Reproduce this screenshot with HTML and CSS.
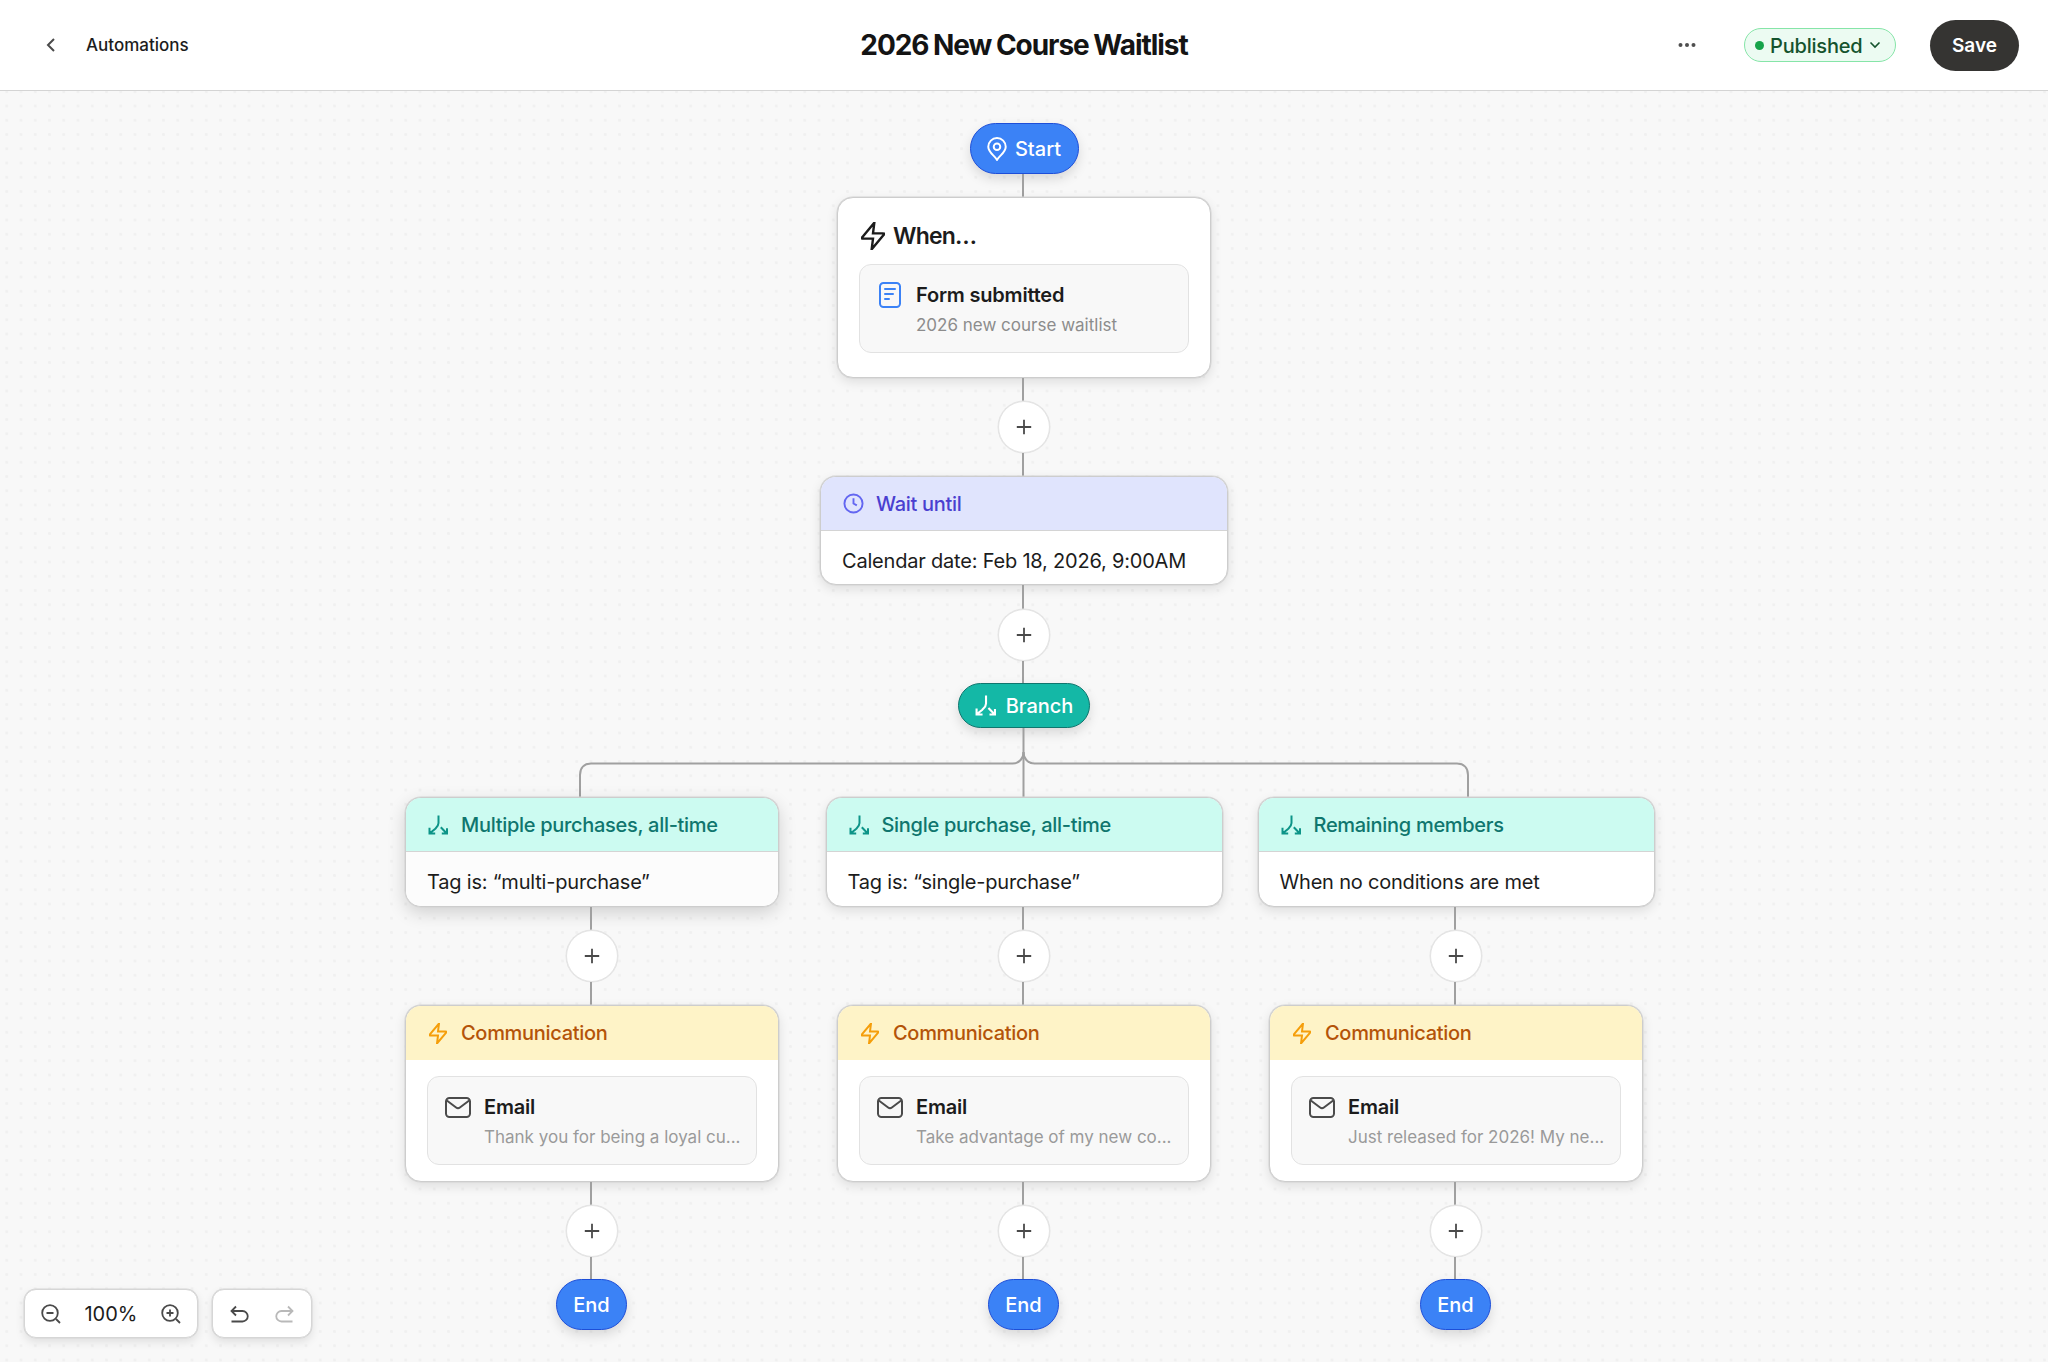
FILE: index.html
```html
<!DOCTYPE html>
<html lang="en">
<head>
<meta charset="utf-8">
<title>2026 New Course Waitlist</title>
<link rel="stylesheet" href="styles.css">
</head>
<body>
<svg class="sprites" width="0" height="0" aria-hidden="true">
  <symbol id="zap" viewBox="3 1.500 18 21"><path d="M13 2 4.090 12.690c-.35.42-.52.63-.53.8 0 .16.07.3.19.4.14.11.41.11.95.11H12l-1 8 8.910-10.690c.35-.42.52-.63.53-.8a.5.5 0 0 0-.19-.4c-.14-.11-.41-.11-.95-.11H12l1-8Z"/></symbol>
  <symbol id="branch" viewBox="0 0 20 20"><path d="M10.500.5V8c0 3-2 4.500-3.500 6L1.500 18.500M1.500 12.800v5.700h5.700M12.800 12.300l6 6.200M19 13.300v5.200h-5.200"/></symbol>
  <symbol id="mail" viewBox="0 0 26 21"><rect x="1" y="1" width="24" height="19" rx="3.500"/><path d="m1.800 3.500 9.300 7c1.200.9 2.600.9 3.800 0l9.300-7"/></symbol>
  <symbol id="plus" viewBox="0 0 16 16"><path d="M8 .8v14.400M.8 8h14.400"/></symbol>
</svg>

<header class="topbar">
  <nav class="crumb">
    <svg class="chevron" width="10" height="16" viewBox="0 0 10 16"><path d="M8 2 2 8l6 6"/></svg>
    <span class="crumb-label">Automations</span>
  </nav>
  <h1 class="title">2026 New Course Waitlist</h1>
  <div class="actions">
    <svg class="more" width="18" height="6" viewBox="0 0 18 6"><circle cx="2.500" cy="3" r="2"/><circle cx="9" cy="3" r="2"/><circle cx="15.500" cy="3" r="2"/></svg>
    <div class="status">
      <span class="status-dot"></span>
      <span class="status-label">Published</span>
      <svg class="status-caret" width="12" height="8" viewBox="0 0 12 8"><path d="m1.500 1.500 4.500 4.500 4.500-4.500"/></svg>
    </div>
    <button class="save">Save</button>
  </div>
</header>

<main class="canvas">
  <div class="pill pill-blue pill-start">
    <svg class="pin" width="20" height="24" viewBox="3 1 18 22"><path d="M12 13a3 3 0 1 0 0-6 3 3 0 0 0 0 6Z"/><path d="M12 22c2-4 8-6.500 8-12a8 8 0 1 0-16 0c0 5.500 6 8 8 12Z"/></svg>
    Start
  </div>
  <div class="link"></div>
  <section class="card card-when">
    <div class="when-title">
      <svg class="when-icon" width="24" height="28"><use href="#zap"/></svg>
      <span class="when-label">When…</span>
    </div>
    <div class="detail">
      <div class="detail-icon">
        <svg class="doc" width="22" height="26" viewBox="0 0 22 26"><rect x="1" y="1" width="20" height="24" rx="3.500"/><path d="M6 7h10M6 12h8M6 17h4"/></svg>
      </div>
      <div>
        <div class="detail-title">Form submitted</div>
        <div class="detail-sub">2026 new course waitlist</div>
      </div>
    </div>
  </section>
  <div class="link"></div>
  <button class="add"><svg class="add-icon" width="16" height="16"><use href="#plus"/></svg></button>
  <div class="link"></div>
  <section class="card card-wait">
    <div class="card-head head-indigo">
      <svg class="head-icon clock" width="21" height="21" viewBox="0 0 22 22"><circle cx="11" cy="11" r="9.500"/><path d="M11 5.500V11l3.500 2"/></svg>
      Wait until
    </div>
    <div class="card-body">Calendar date: Feb 18, 2026, 9:00AM</div>
  </section>
  <div class="link link-long"></div>
  <button class="add"><svg class="add-icon" width="16" height="16"><use href="#plus"/></svg></button>
  <div class="link link-short"></div>
  <div class="pill pill-teal pill-branch">
    <svg class="branch-icon" width="21" height="21"><use href="#branch"/></svg>
    Branch
  </div>
  <svg class="fork" width="892" height="69" viewBox="0 0 892 69">
    <path d="M445.500 0V69"/>
    <path d="M445.500 24c0 6-4 11.500-11 11.500H13C6 35.500 2 40 2 47v22"/>
    <path d="M445.500 24c0 6 4 11.500 11 11.500H879c7 0 11 4.500 11 11.500v22"/>
  </svg>

  <div class="columns">
    <div class="column">
      <section class="card card-branch card-narrow card-raised">
        <div class="card-head head-teal">
          <svg class="head-icon teal-icon" width="20" height="20"><use href="#branch"/></svg>
          Multiple purchases, all-time
        </div>
        <div class="card-body">Tag is: “multi-purchase”</div>
      </section>
      <div class="link"></div>
      <button class="add"><svg class="add-icon" width="16" height="16"><use href="#plus"/></svg></button>
      <div class="link"></div>
      <section class="card card-comm">
        <div class="card-head head-amber">
          <svg class="head-icon amber-icon" width="18" height="21"><use href="#zap"/></svg>
          Communication
        </div>
        <div class="comm-body">
          <div class="detail">
            <div class="detail-icon"><svg class="mail" width="26" height="21"><use href="#mail"/></svg></div>
            <div>
              <div class="detail-title">Email</div>
              <div class="detail-sub">Thank you for being a loyal cu...</div>
            </div>
          </div>
        </div>
      </section>
      <div class="link"></div>
      <button class="add"><svg class="add-icon" width="16" height="16"><use href="#plus"/></svg></button>
      <div class="link link-short"></div>
      <div class="pill pill-blue pill-end">End</div>
    </div>

    <div class="column">
      <section class="card card-branch">
        <div class="card-head head-teal">
          <svg class="head-icon teal-icon" width="20" height="20"><use href="#branch"/></svg>
          Single purchase, all-time
        </div>
        <div class="card-body">Tag is: “single-purchase”</div>
      </section>
      <div class="link"></div>
      <button class="add"><svg class="add-icon" width="16" height="16"><use href="#plus"/></svg></button>
      <div class="link"></div>
      <section class="card card-comm">
        <div class="card-head head-amber">
          <svg class="head-icon amber-icon" width="18" height="21"><use href="#zap"/></svg>
          Communication
        </div>
        <div class="comm-body">
          <div class="detail">
            <div class="detail-icon"><svg class="mail" width="26" height="21"><use href="#mail"/></svg></div>
            <div>
              <div class="detail-title">Email</div>
              <div class="detail-sub">Take advantage of my new co...</div>
            </div>
          </div>
        </div>
      </section>
      <div class="link"></div>
      <button class="add"><svg class="add-icon" width="16" height="16"><use href="#plus"/></svg></button>
      <div class="link link-short"></div>
      <div class="pill pill-blue pill-end">End</div>
    </div>

    <div class="column">
      <section class="card card-branch">
        <div class="card-head head-teal">
          <svg class="head-icon teal-icon" width="20" height="20"><use href="#branch"/></svg>
          Remaining members
        </div>
        <div class="card-body">When no conditions are met</div>
      </section>
      <div class="link"></div>
      <button class="add"><svg class="add-icon" width="16" height="16"><use href="#plus"/></svg></button>
      <div class="link"></div>
      <section class="card card-comm">
        <div class="card-head head-amber">
          <svg class="head-icon amber-icon" width="18" height="21"><use href="#zap"/></svg>
          Communication
        </div>
        <div class="comm-body">
          <div class="detail">
            <div class="detail-icon"><svg class="mail" width="26" height="21"><use href="#mail"/></svg></div>
            <div>
              <div class="detail-title">Email</div>
              <div class="detail-sub">Just released for 2026! My ne...</div>
            </div>
          </div>
        </div>
      </section>
      <div class="link"></div>
      <button class="add"><svg class="add-icon" width="16" height="16"><use href="#plus"/></svg></button>
      <div class="link link-short"></div>
      <div class="pill pill-blue pill-end">End</div>
    </div>
  </div>

  <div class="toolbar">
    <div class="tool-group tool-zoom">
      <svg class="tool-icon" width="20" height="20" viewBox="0 0 20 20"><circle cx="9" cy="9" r="7.800"/><path d="M5.500 9h7M15 15l4 4"/></svg>
      <span class="tool-value">100%</span>
      <svg class="tool-icon" width="20" height="20" viewBox="0 0 20 20"><circle cx="9" cy="9" r="7.800"/><path d="M5.500 9h7M9 5.500v7M15 15l4 4"/></svg>
    </div>
    <div class="tool-group tool-history">
      <svg class="tool-icon" width="19" height="18" viewBox="0 0 19 18"><path d="M1.500 6h11a5 5 0 0 1 0 10.500H1.500M6 1.500 1.500 6 6 10.500"/></svg>
      <svg class="tool-icon tool-off" width="19" height="18" viewBox="0 0 19 18"><path d="M17.500 6h-11a5 5 0 0 0 0 10.500h11M13 1.500 17.500 6 13 10.500"/></svg>
    </div>
  </div>
</main>
</body>
</html>
```

FILE: styles.css
```css
* { box-sizing: border-box; }

html, body {
  margin: 0;
  height: 1362px;
  overflow: hidden;
}

body {
  font-family: Inter, "Liberation Sans", sans-serif;
  color: #1c1c1c;
  background: #f8f8f8;
}

.sprites { position: absolute; }

button {
  font: inherit;
  padding: 0;
  border: 0;
}

/* Top bar */
.topbar {
  display: grid;
  grid-template-columns: 1fr auto 1fr;
  align-items: center;
  height: 91px;
  background: #fff;
  border-bottom: 1px solid #d4d4d4;
}

.crumb {
  display: flex;
  align-items: center;
  padding-left: 46px;
}

.chevron path {
  fill: none;
  stroke: #4a4a4a;
  stroke-width: 2;
}

.crumb-label {
  margin-left: 30px;
  font-size: 17px;
  font-weight: 500;
}

.title {
  margin: 0;
  font-size: 28px;
  font-weight: 700;
  letter-spacing: -1.05px;
  word-spacing: -1px;
  color: #141414;
}

.actions {
  display: flex;
  align-items: center;
  justify-content: flex-end;
  padding-right: 29px;
}

.more {
  margin-right: 48px;
  fill: #4f4f4f;
}

.status {
  display: flex;
  align-items: center;
  width: 152px;
  height: 34px;
  padding-left: 10px;
  margin-right: 34px;
  background: #ecfbf2;
  border: 1px solid #86e5a8;
  border-radius: 17px;
  color: #14532d;
}

.status-dot {
  flex: none;
  width: 9px;
  height: 9px;
  border-radius: 50%;
  background: #16a34a;
}

.status-label {
  margin: 1px 7px 0 6px;
  font-size: 20px;
  font-weight: 500;
  letter-spacing: -0.2px;
}

.status-caret path {
  fill: none;
  stroke: #14532d;
  stroke-width: 1.600;
}

.save {
  width: 89px;
  height: 51px;
  padding-top: 1px;
  border-radius: 26px;
  background: #353432;
  color: #fff;
  font-size: 19px;
  font-weight: 600;
}

/* Canvas */
.canvas {
  position: relative;
  display: flex;
  flex-direction: column;
  align-items: center;
  height: 1271px;
  padding-top: 32px;
  background-color: #f8f8f8;
  background-image: radial-gradient(circle, #f0f0f0 1.200px, transparent 1.600px);
  background-size: 14.250px 14.250px;
  background-position: -0.4px -6.4px;
}

.link {
  flex: none;
  width: 2px;
  height: 23px;
  margin-right: 2px;
  background: #a0a0a0;
}

.link-long { height: 24px; }
.link-short { height: 22px; }

.pill {
  flex: none;
  display: flex;
  align-items: center;
  justify-content: center;
  border-radius: 26px;
  color: #fff;
  font-size: 20px;
  font-weight: 500;
  box-shadow: 0 5px 12px rgba(0, 0, 0, .13);
}

.pill-blue {
  background: #3b82f6;
  border: 1px solid #1d4ed8;
}

.pill-teal {
  background: #14b8a6;
  border: 1px solid #0f766e;
}

.pill-start {
  gap: 8px;
  width: 109px;
  height: 51px;
}

.pill-branch {
  gap: 10px;
  width: 132px;
  height: 45px;
}

.pill-end {
  width: 71px;
  height: 51px;
  margin-right: 1px;
}

.pin path {
  fill: none;
  stroke: #fff;
  stroke-width: 1.800;
}

.branch-icon,
.teal-icon {
  fill: none;
  stroke: #fff;
  stroke-width: 2;
}

.teal-icon { stroke: #0d9488; }

.fork {
  flex: none;
  display: block;
}

.fork path {
  fill: none;
  stroke: #a0a0a0;
  stroke-width: 2;
}

.card {
  flex: none;
  background: #fff;
  border: 1px solid #cdcdcd;
  border-radius: 16px;
  box-shadow: 0 0 0 .5px #d4d4d4, 0 4px 12px rgba(0, 0, 0, .11);
  overflow: hidden;
}

.card-when {
  width: 374px;
  height: 181px;
  padding: 23px 21px 0;
}

.when-title {
  display: flex;
  align-items: center;
  gap: 8px;
  height: 30px;
  margin-bottom: 13px;
}

.when-label {
  font-size: 23px;
  font-weight: 600;
  letter-spacing: -0.8px;
}

.when-icon {
  margin-left: 2px;
  fill: none;
  stroke: #1c1c1c;
  stroke-width: 1.800;
}

.detail {
  display: flex;
  gap: 11px;
  height: 89px;
  padding: 16px 17px 0;
  background: #f8f8f8;
  border: 1px solid #e2e2e2;
  border-radius: 12px;
}

.detail-icon {
  flex: none;
  display: flex;
  justify-content: center;
  align-items: center;
  width: 28px;
  height: 28px;
}

.doc {
  margin-right: 2px;
}

.doc rect {
  fill: none;
  stroke: #3b82f6;
  stroke-width: 2;
}

.doc path {
  fill: none;
  stroke: #3b82f6;
  stroke-width: 2;
  stroke-linecap: round;
}

.mail {
  margin-right: 2px;
  fill: none;
  stroke: #4b4b4b;
  stroke-width: 2;
}

.detail-title {
  height: 28px;
  margin-bottom: 2px;
  font-size: 20px;
  font-weight: 600;
  line-height: 28px;
  letter-spacing: -0.2px;
}

.detail-sub {
  height: 28px;
  color: #8c8c8c;
  font-size: 17px;
  line-height: 28px;
  white-space: nowrap;
}

.comm-body .detail-sub { color: #9a9a9a; }

.add {
  flex: none;
  display: flex;
  align-items: center;
  justify-content: center;
  width: 52px;
  height: 52px;
  background: #fff;
  border: 1px solid #e4e4e4;
  border-radius: 50%;
  box-shadow: 0 0 0 .5px #e4e4e4;
}

.add-icon {
  fill: none;
  stroke: #4a4a4a;
  stroke-width: 1.800;
}

.card-wait {
  width: 408px;
  height: 109px;
}

.card-head {
  display: flex;
  align-items: center;
  gap: 12px;
  height: 54px;
  padding-left: 21px;
  font-size: 20px;
  font-weight: 500;
  letter-spacing: -0.3px;
  border-bottom: 1px solid #d4d4d4;
}

.card-body {
  display: flex;
  align-items: center;
  height: 54px;
  padding: 6px 0 0 21px;
  font-size: 20px;
  letter-spacing: -0.2px;
}

.head-icon { margin-left: 1px; }

.head-indigo {
  background: #e0e4fd;
  color: #4a3fd0;
}

.clock {
  fill: none;
  stroke: #6366f1;
  stroke-width: 2;
}

.head-teal {
  gap: 13px;
  background: #ccfbf1;
  color: #0f766e;
}

.head-amber {
  gap: 14px;
  height: 54px;
  background: #fef3c7;
  color: #b45309;
  border-bottom: 0;
}

.amber-icon {
  margin-left: 2px;
  fill: none;
  stroke: #f59e0b;
  stroke-width: 2;
}

.columns {
  display: grid;
  grid-template-columns: repeat(3, 432px);
  flex: none;
}

.column {
  display: flex;
  flex-direction: column;
  align-items: center;
}

.card-branch {
  width: 397px;
  height: 110px;
}

.card-narrow { width: 374px; }

.card-raised {
  box-shadow: 0 0 0 .5px #d4d4d4, 0 6px 18px rgba(0, 0, 0, .16);
}

.card-raised .card-body { background: #fcfcfc; }

.card-comm {
  width: 374px;
  height: 177px;
}

.comm-body { padding: 16px 21px 0; }

/* Toolbar */
.toolbar {
  position: absolute;
  left: 24px;
  bottom: 24px;
  display: flex;
  gap: 14px;
}

.tool-group {
  display: flex;
  align-items: center;
  justify-content: space-between;
  height: 49px;
  background: #fff;
  border: 1px solid #d6d6d6;
  border-radius: 12px;
  box-shadow: 0 0 0 .5px #d6d6d6, 0 4px 10px rgba(0, 0, 0, .1);
}

.tool-zoom {
  width: 174px;
  padding: 0 16px;
}

.tool-history {
  width: 100px;
  padding: 0 17px;
}

.tool-icon {
  fill: none;
  stroke: #4a4a4a;
  stroke-width: 1.800;
}

.tool-off { stroke: #b9b9b9; }

.tool-value {
  font-size: 20px;
}
```
